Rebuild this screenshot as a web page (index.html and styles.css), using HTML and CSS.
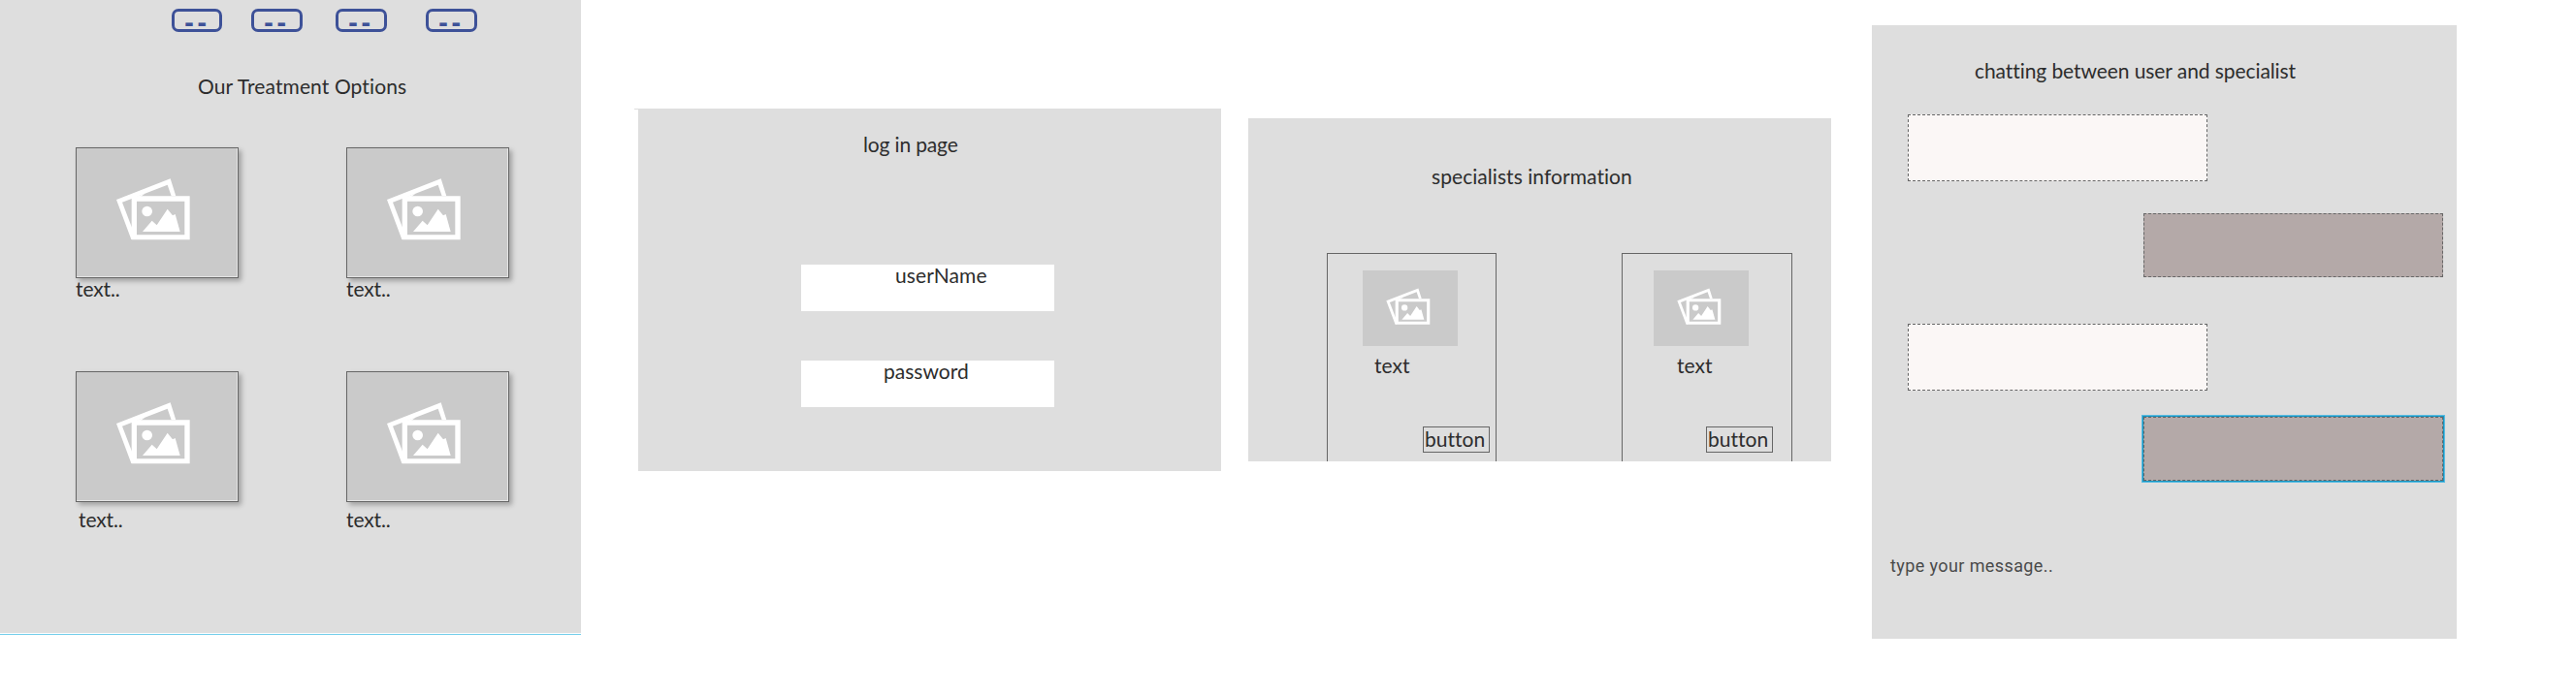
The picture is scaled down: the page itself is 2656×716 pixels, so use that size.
FILE: index.html
```html
<!DOCTYPE html>
<html lang="en">
<head>
<meta charset="utf-8">
<title>Wireframes</title>
<link rel="stylesheet" href="styles.css">
</head>
<body>
<svg class="defs" width="0" height="0" aria-hidden="true">
  <symbol id="photo" viewBox="27 39 495 396" preserveAspectRatio="none">
    <path fill="#fff" fill-rule="evenodd" d="M150 198 L317 133 L334 187 L320 187 L308 152 L168 206 L204 300 L204 321 L196 321 Z"/>
    <path fill="#fff" fill-rule="evenodd" d="M197 187 H377 V322 H197 Z M213 203 V307 H361 V203 Z"/>
    <path fill="#fff" d="M197 195 L240 178 L218 194 Z"/>
    <circle cx="245" cy="234" r="16" fill="#fff"/>
    <path fill="#fff" d="M231 297 L260 263 L275 277 L308 227 L324 247 L332 243 L347 297 Z"/>
  </symbol>
</svg>
<main class="board">
  <section class="screen treatments">
    <nav class="chips">
      <span class="chip chip-first">--</span><span class="chip">--</span><span class="chip">--</span><span class="chip">--</span>
    </nav>
    <h2 class="title">Our Treatment Options</h2>
    <div class="gallery">
      <figure class="tile"><svg class="thumb"><use href="#photo"/></svg><figcaption class="caption">text..</figcaption></figure>
      <figure class="tile"><svg class="thumb"><use href="#photo"/></svg><figcaption class="caption">text..</figcaption></figure>
      <figure class="tile low"><svg class="thumb"><use href="#photo"/></svg><figcaption class="caption shifted">text..</figcaption></figure>
      <figure class="tile low"><svg class="thumb"><use href="#photo"/></svg><figcaption class="caption">text..</figcaption></figure>
    </div>
  </section>

  <section class="screen login">
    <h2 class="title">log in page</h2>
    <div class="field user">userName</div>
    <div class="field pass">password</div>
  </section>

  <section class="screen specialists">
    <h2 class="title">specialists information</h2>
    <div class="cards">
      <article class="card one"><svg class="avatar"><use href="#photo"/></svg><p class="name">text</p><span class="button">button</span></article>
      <article class="card two"><svg class="avatar"><use href="#photo"/></svg><p class="name">text</p><span class="button">button</span></article>
    </div>
  </section>

  <section class="screen chat">
    <h2 class="title">chatting between user and specialist</h2>
    <div class="bubble theirs"></div>
    <div class="bubble mine"></div>
    <div class="bubble theirs second"></div>
    <div class="bubble mine selected"></div>
    <p class="prompt">type your message..</p>
  </section>
</main>
</body>
</html>
```
FILE: styles.css
```css
* { box-sizing: border-box; }
body {
  margin: 0;
  background: #fff;
  color: #2d2d2d;
  font: 400 21px/26px Lato, "Open Sans", sans-serif;
  font-variant-ligatures: none;
}
.defs { display: block; height: 0; }
.board { display: flex; align-items: flex-start; width: 2656px; height: 716px; overflow: hidden; }
.screen { background: #dedede; flex: none; }
.title { margin: 0; font-size: inherit; font-weight: 400; white-space: nowrap; }

/* Treatment options */
.treatments { width: 599px; height: 655px; border-bottom: 1px solid #72cdea; box-shadow: inset 0 -1px #fff; }
.chips { display: flex; padding: 9px 0 0 177px; }
.chip {
  width: 53px; height: 24px; margin-right: 34px;
  border: 3px solid #3d5198; border-radius: 7px;
  color: #3d5198; font: 700 24px/25px "DejaVu Sans", sans-serif;
  letter-spacing: 3.4px; padding-left: 10px; white-space: nowrap;
}
.chip-first { width: 52px; margin-right: 30px; }
.chip:nth-child(3) { margin-right: 40px; }
.treatments .title { padding: 43px 0 0 204px; letter-spacing: .11px; }
.gallery { display: grid; grid-template-columns: 279px 168px; padding: 50px 0 0 78px; }
.tile { margin: 0; width: 168px; height: 231px; }
.thumb {
  display: block; width: 168px; height: 135px; padding: 0 1px 1px 0;
  border: 1px solid #666; background: #cacaca;
  box-shadow: 3px 3px 5px rgba(0,0,0,.28), inset -1px -1px #e4e4e4;
}
.caption { margin-top: -2px; letter-spacing: -.1px; }
.low .caption { margin-top: 5px; }
.low .shifted { padding-left: 3px; }

/* Log in */
.login { width: 601px; height: 374px; margin: 112px 0 0 59px; position: relative; }
.login::before { content: ""; position: absolute; left: -4px; top: 0; width: 4px; height: 1px; background: #dedede; }
.login .title { padding: 24px 0 0 232px; letter-spacing: -.15px; }
.field { width: 261px; height: 48px; margin-left: 168px; background: #fff; line-height: 22px; }
.user { margin-top: 111px; padding-left: 97px; letter-spacing: .1px; }
.pass { margin-top: 51px; padding-left: 85px; }

/* Specialists */
.specialists { width: 601px; height: 354px; margin: 122px 0 0 28px; overflow: hidden; }
.specialists .title { padding: 47px 0 0 189px; letter-spacing: .06px; }
.cards { display: flex; gap: 129px; padding: 66px 0 0 81px; }
.card { width: 175px; height: 230px; border: 1px solid #666; padding: 17px 0 0 36px; }
.card.two { width: 176px; padding-left: 32px; }
.avatar { display: block; width: 98px; height: 78px; background: #cacaca; }
.name { margin: 7px 0 0 12px; }
.two .name { margin-left: 24px; }
.button {
  display: block; width: 69px; height: 27px; margin: 50px 0 0 62px;
  border: 1px solid #666; padding-left: 1px; line-height: 24px;
}
.two .button { margin-left: 54px; }

/* Chat */
.chat { width: 603px; height: 633px; margin: 26px 0 0 42px; }
.chat .title { padding: 34px 0 0 106px; letter-spacing: -.08px; }
.bubble { width: 309px; border: 1px dashed #666; }
.theirs { height: 69px; margin: 32px 0 0 37px; background: #fbf7f6; }
.mine { height: 66px; margin: 33px 0 0 280px; background: #b4a9a8; }
.second { margin-top: 48px; }
.selected { margin-top: 27px; box-shadow: 0 0 0 1px #1695c2, 0 0 0 2px #5bbbe0; }
.prompt { margin: 75px 0 0 19px; color: #4a4a4a; font: 400 18px/26px Roboto, sans-serif; letter-spacing: .4px; }
```
